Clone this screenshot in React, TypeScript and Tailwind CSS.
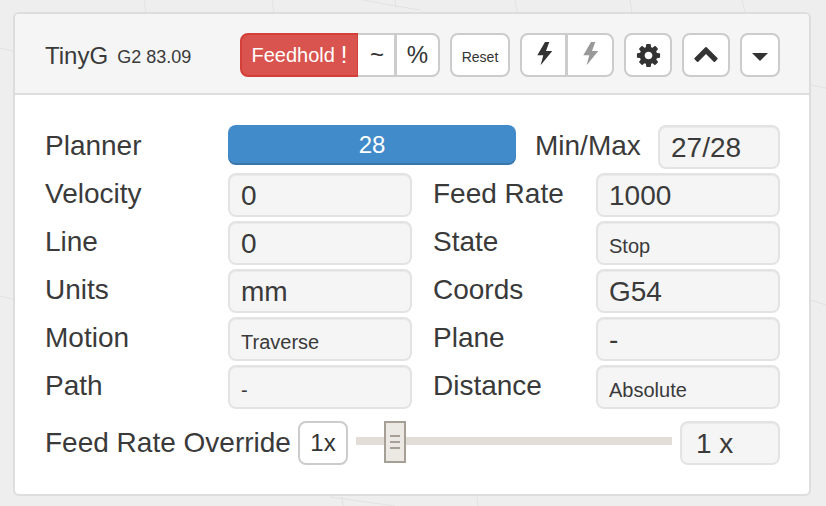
import type { ReactNode } from 'react';

const Well = ({ className = '', small, children }: { className?: string; small?: boolean; children: ReactNode }) => (
  <div
    className={`h-11 flex items-center px-[11px] bg-[#f5f5f5] border-2 border-[#e3e3e3] rounded-lg shadow-[inset_0_1px_1px_rgba(0,0,0,0.05)] text-[#3a3a3a] ${
      small ? 'text-[20px] pt-[5px]' : 'text-[28px] pt-[2px]'
    } ${className}`}
  >
    {children}
  </div>
);

const Label = ({ className = '', children }: { className?: string; children: ReactNode }) => (
  <div className={`text-[28px] leading-[40px] pt-px text-[#3a3a3a] ${className}`}>{children}</div>
);

const Row = ({ left, leftValue, leftSmall, right, rightValue, rightSmall }: {
  left: string;
  leftValue: string;
  leftSmall?: boolean;
  right: string;
  rightValue: string;
  rightSmall?: boolean;
}) => (
  <div className="flex items-start h-11">
    <Label className="w-[183px]">{left}</Label>
    <Well small={leftSmall} className="w-[184px]">{leftValue}</Well>
    <Label className="w-[184px] pl-[21px]">{right}</Label>
    <Well small={rightSmall} className="w-[184px]">{rightValue}</Well>
  </div>
);

const Icon = ({ d, className = '' }: { d: string; className?: string }) => (
  <svg viewBox="0 0 1792 1792" fill="currentColor" className={className}>
    <path d={d} />
  </svg>
);

const Bolt = ({ className = '' }: { className?: string }) => (
  <svg viewBox="0 0 16 24" width="16" height="24" fill="currentColor" className={className}>
    <polygon points="8,0 12.3,0 9,9 15.3,9 3.6,23.3 6.3,13.3 0.3,13.3" />
  </svg>
);

const cog = 'M1152 896q0-106-75-181t-181-75-181 75-75 181 75 181 181 75 181-75 75-181zm512-109v222q0 12-8 23t-20 13l-185 28q-19 54-39 91 35 50 107 138 10 12 10 25t-9 23q-27 37-99 108t-94 71q-12 0-26-9l-138-108q-44 23-91 38-16 136-29 186-7 28-36 28h-222q-14 0-24.500-8.500t-11.500-21.500l-28-184q-49-16-90-37l-141 107q-10 9-25 9-14 0-25-11-126-114-165-168-7-10-7-23 0-12 8-23 15-21 51-66.500t54-70.500q-27-50-41-99l-183-27q-13-2-21-12.500t-8-23.500v-222q0-12 8-23t19-13l186-28q14-46 39-92-40-57-107-138-10-12-10-24 0-10 9-23 26-36 98.500-107.500t94.500-71.500q13 0 26 10l138 107q44-23 91-38 16-136 29-186 7-28 36-28h222q14 0 24.500 8.500t11.500 21.500l28 184q49 16 90 37l142-107q9-9 24-9 13 0 25 10 129 119 165 170 7 8 7 22 0 12-8 23-15 21-51 66.500t-54 70.500q26 50 41 98l183 28q13 2 21 12.500t8 23.500z';
const chevron = 'M1683 1331l-166 165q-19 19-45 19t-45-19l-531-531-531 531q-19 19-45 19t-45-19l-166-165q-19-19-19-45.500t19-45.500l742-741q19-19 45-19t45 19l742 741q19 19 19 45.500t-19 45.500z';

const btn = 'h-11 flex items-center justify-center bg-white border-2 border-[#ccc] text-[#333]';

const App = () => {
  return (
    <div className="relative w-[826px] h-[506px] overflow-hidden bg-[#eeeeee] pt-3 pl-[13px] font-['Liberation_Sans',Arial,sans-serif]">
      <svg className="absolute inset-0" width="826" height="506" fill="none" stroke="#e2e2e2" strokeWidth="1">
        <path d="M0 48L13 51M144 0L146 12M272 0L274 12M363 0L396 6L420 10M395 0L396 8M515 0L517 12M630 0L632 12M742 0L745 12M811 85L826 88M811 300L826 305M330 497L395 506M342 497L343 506M477 497L478 506M0 296L13 299" />
      </svg>
      <div className="relative w-[798px] h-[484px] bg-white border-2 border-[#ddd] rounded-md overflow-hidden">
        <div className="h-[81px] bg-[#f5f5f5] border-b-2 border-[#ddd] flex items-start pt-[19px] pl-[30px]">
          <div className="w-[195px] h-11 flex items-center pt-[2px] text-[#3a3a3a] whitespace-nowrap">
            <span className="text-[24px]">TinyG</span>
            <span className="text-[18px] ml-[9px] pt-[3px]">G2 83.09</span>
          </div>
          <div className="flex">
            <div className="w-[119px] h-11 flex items-center justify-center bg-[#d9534f] border-2 border-[#d43f3a] rounded-l-lg text-white text-[20px]">
              Feedhold<span className="ml-[6px] text-[24px] leading-none">!</span>
            </div>
            <div className={`${btn} w-[38px] -ml-px text-[24px] border-l-0 pl-[2px]`}>~</div>
            <div className={`${btn} w-[45px] text-[24px] rounded-r-lg border-l-2 -ml-[1px]`}>%</div>
          </div>
          <div className={`${btn} w-[60px] ml-[10px] rounded-lg text-[14px] pt-[4px]`}>Reset</div>
          <div className="flex ml-[10px]">
            <div className={`${btn} w-[47px] rounded-l-lg`}><Bolt className="ml-[3px] mb-[3px]" /></div>
            <div className={`${btn} w-[48px] -ml-[1px] rounded-r-lg text-[#999]`}><Bolt className="ml-[1px] mb-[3px]" /></div>
          </div>
          <div className={`${btn} w-[48px] ml-[10px] rounded-lg`}><Icon d={cog} className="w-[27px] h-[27px]" /></div>
          <div className={`${btn} w-[48px] ml-[10px] rounded-lg`}><Icon d={chevron} className="w-[26px] h-[26px] mb-[5px]" /></div>
          <div className={`${btn} w-[40px] ml-[10px] rounded-lg`}>
            <div className="w-0 h-0 mt-[4px] border-x-[8px] border-x-transparent border-t-[8px] border-t-[#333]" />
          </div>
        </div>
        <div className="pl-[30px] pt-[30px] flex flex-col gap-1">
          <div className="flex items-start h-11">
            <Label className="w-[183px]">Planner</Label>
            <div className="w-[288px] h-10 flex items-center justify-center bg-[#428bca] rounded-lg text-white text-[24px] shadow-[inset_0_-2px_0_rgba(0,0,0,0.15)]">28</div>
            <Label className="w-[142px] pl-[19px]">Min/Max</Label>
            <Well className="w-[122px] h-11">27/28</Well>
          </div>
          <Row left="Velocity" leftValue="0" right="Feed Rate" rightValue="1000" />
          <Row left="Line" leftValue="0" right="State" rightValue="Stop" rightSmall />
          <Row left="Units" leftValue="mm" right="Coords" rightValue="G54" />
          <Row left="Motion" leftValue="Traverse" leftSmall right="Plane" rightValue="-" />
          <Row left="Path" leftValue="-" leftSmall right="Distance" rightValue="Absolute" rightSmall />
          <div className="flex items-center h-11 mt-2">
            <div className="text-[28px] text-[#3a3a3a] whitespace-nowrap w-[253px]">Feed Rate Override</div>
            <div className={`${btn} w-[50px] rounded-lg text-[24px] text-[#3a3a3a]`}>1x</div>
            <div className="relative w-[316px] h-2 ml-2 -mt-[4px] bg-[#e2ddd6]">
              <div className="absolute left-[28px] -top-[16px] w-[22px] h-[42px] bg-[#ece8e3] border-2 border-[#a69f96] flex flex-col items-center justify-center gap-[4px]">
                <div className="w-[10px] h-[2px] bg-[#a69f96]" />
                <div className="w-[10px] h-[2px] bg-[#a69f96]" />
                <div className="w-[10px] h-[2px] bg-[#a69f96]" />
              </div>
            </div>
            <Well className="w-[100px] ml-2 pl-[14px]">1 x</Well>
          </div>
        </div>
      </div>
    </div>
  );
};

export default App;
